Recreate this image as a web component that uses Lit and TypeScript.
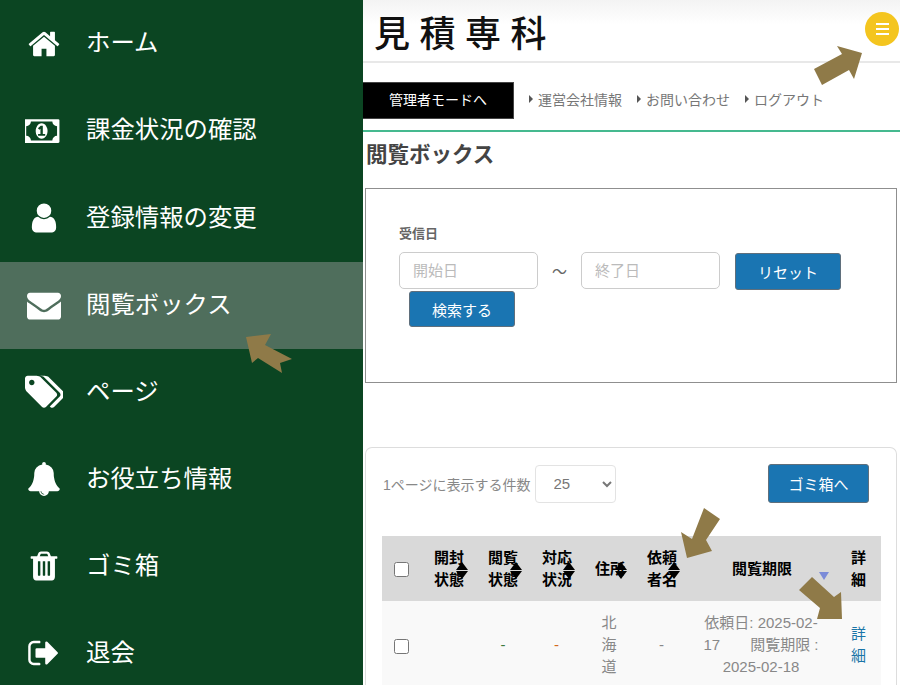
import { LitElement, html, css, svg } from "lit";
import { customElement } from "lit/decorators.js";

type Item = { label: string; vb: string; d: string; cls?: string; active?: boolean };

const items: Item[] = [
  { label: "ホーム", vb: "0 0 1792 1792", d: "M1472 992v480q0 26-19 45t-45 19h-384v-384h-256v384h-384q-26 0-45-19t-19-45v-480q0-1 .5-3t.5-3l575-474 575 474q1 2 1 6zm223-69l-62 74q-8 9-21 11h-3q-13 0-21-7l-692-577-692 577q-12 8-24 7-13-2-21-11l-62-74q-8-10-7-23.5t11-21.5l719-599q32-26 76-26t76 26l244 204v-195q0-14 9-23t23-9h192q14 0 23 9t9 23v408l219 182q10 8 11 21.5t-7 23.5z" },
  { label: "課金状況の確認", vb: "0 0 2048 1792", cls: "wide", d: "M704 1152h384v-96h-128v-448h-114l-148 137 77 80q42-37 55-57h2v288h-128v96zm512-256q0 70-21 142t-59.5 134-101.5 101-138 39-138-39-101.5-101-59.5-134-21-142 21-142 59.5-134 101.5-101 138-39 138 39 101.5 101 59.5 134 21 142zm512 256v-512q-106 0-181-75t-75-181h-1152q0 106-75 181t-181 75v512q106 0 181 75t75 181h1152q0-106 75-181t181-75zm128-832v1152q0 26-19 45t-45 19h-1792q-26 0-45-19t-19-45v-1152q0-26 19-45t45-19h1792q26 0 45 19t19 45z" },
  { label: "登録情報の変更", vb: "0 0 1792 1792", d: "M1536 1399q0 109-62.5 187t-150.5 78h-854q-88 0-150.5-78t-62.5-187q0-85 8.5-160.5t31.5-152 58.5-131 94-89 134.5-34.5q131 128 313 128t313-128q76 0 134.5 34.5t94 89 58.5 131 31.5 152 8.5 160.5zm-256-887q0 159-112.5 271.5t-271.5 112.5-271.5-112.5-112.5-271.5 112.5-271.5 271.5-112.5 271.5 112.5 112.5 271.5z" },
  { label: "閲覧ボックス", active: true, vb: "0 0 1792 1792", d: "M1792 710v794q0 66-47 113t-113 47h-1472q-66 0-113-47t-47-113v-794q44 49 101 87 362 246 497 345 57 42 92.5 65.5t94.5 48 110 24.5h2q51 0 110-24.5t94.5-48 92.5-65.5q170-123 498-345 57-39 100-87zm0-294q0 79-49 151t-122 123q-376 261-468 325-10 7-42.5 30.5t-54 38-52 32.5-57.5 27-50 9h-2q-23 0-50-9t-57.5-27-52-32.5-54-38-42.5-30.5q-91-64-262-182.5t-205-142.5q-62-42-117-115.5t-55-136.5q0-78 41.5-130t118.5-52h1472q65 0 112.5 47t47.5 113z" },
  { label: "ページ", vb: "0 0 1792 1792", cls: "wide", d: "M448 448q0-53-37.5-90.5t-90.5-37.5-90.5 37.5-37.5 90.5 37.5 90.5 90.5 37.5 90.5-37.5 37.5-90.5zm1067 576q0 53-37 90l-491 492q-39 37-91 37-53 0-90-37l-715-716q-38-37-64.5-101t-26.5-117v-416q0-52 38-90t90-38h416q53 0 117 26.5t102 64.5l715 714q37 39 37 91zm384 0q0 53-37 90l-491 492q-39 37-91 37-36 0-59-14t-53-45l470-470q37-37 37-90 0-52-37-91l-715-714q-38-38-102-64.5t-117-26.5h224q53 0 117 26.5t102 64.5l715 714q37 39 37 91z" },
  { label: "お役立ち情報", vb: "0 0 1792 1792", d: "M912 1696q0-16-16-16-59 0-101.5-42.5t-42.5-101.5q0-16-16-16t-16 16q0 73 51.5 124.5t124.5 51.5q16 0 16-16zm816-288q0 52-38 90t-90 38h-448q0 106-75 181t-181 75-181-75-75-181h-448q-52 0-90-38t-38-90q50-42 91-88t85-119.5 74.5-158.5 50-206 19.5-260q0-152 117-282.5t307-158.5q-8-19-8-39 0-40 28-68t68-28 68 28 28 68q0 20-8 39 190 28 307 158.5t117 282.5q0 139 19.5 260t50 206 74.5 158.5 85 119.5 91 88z" },
  { label: "ゴミ箱", vb: "0 0 1792 1792", d: "M704 1376v-704q0-14-9-23t-23-9h-64q-14 0-23 9t-9 23v704q0 14 9 23t23 9h64q14 0 23-9t9-23zm256 0v-704q0-14-9-23t-23-9h-64q-14 0-23 9t-9 23v704q0 14 9 23t23 9h64q14 0 23-9t9-23zm256 0v-704q0-14-9-23t-23-9h-64q-14 0-23 9t-9 23v704q0 14 9 23t23 9h64q14 0 23-9t9-23zm-544-992h448l-48-117q-7-9-17-11h-317q-10 2-17 11zm928 32v64q0 14-9 23t-23 9h-96v948q0 83-47 143.5t-113 60.5h-832q-66 0-113-58.5t-47-141.5v-952h-96q-14 0-23-9t-9-23v-64q0-14 9-23t23-9h309l70-167q15-37 54-63t79-26h320q40 0 79 26t54 63l70 167h309q14 0 23 9t9 23z" },
  { label: "退会", vb: "0 0 1792 1792", d: "M704 1440q0 4 1 20t.5 26.5-3 23.5-10 19.5-20.5 6.5h-320q-119 0-203.5-84.5t-84.5-203.5v-704q0-119 84.5-203.5t203.5-84.5h320q13 0 22.5 9.5t9.5 22.5q0 4 1 20t.5 26.5-3 23.5-10 19.5-20.5 6.5h-320q-66 0-113 47t-47 113v704q0 66 47 113t113 47h288l11.5 1 11.5 3 8 5.5 7 9 2 13.5zm928-544q0 26-19 45l-544 544q-19 19-45 19t-45-19-19-45v-288h-448q-26 0-45-19t-19-45v-384q0-26 19-45t45-19h448v-288q0-26 19-45t45-19 45 19l544 544q19 19 19 45z" },
];

const arrows = [
  "862,53 837,46 842,54 814,69 822,85 849,70 854,79",
  "246,337 271,334 265,345 292,359 280,363 282,373 258,358 252,363",
  "687,558 681,532 692,539 704,508 720,519 706,540 712,551",
  "842,619 841,592 834,597 812,577 799,590 820,608 817,619",
];

@customElement("app-root")
export class AppRoot extends LitElement {
  static styles = css`
    :host {
      display: block;
      position: relative;
      width: 900px;
      height: 685px;
      overflow: hidden;
      background: #fff;
      font-family: "Liberation Sans", "Noto Sans CJK JP", Arial, sans-serif;
    }
    * { box-sizing: border-box; }
    .page { display: flex; height: 685px; }
    .side {
      width: 363px;
      flex: none;
      background: #0b4522;
      color: #fff;
      display: flex;
      flex-direction: column;
      overflow: hidden;
    }
    .side-list { padding-top: 0.5px; }
    .item {
      height: 87.1px;
      display: flex;
      align-items: center;
      gap: 23px;
      padding-left: 25px;
      padding-bottom: 1px;
      font-size: 24.4px;
      line-height: 1;
    }
    .item.active { background: #4f6e5c; }
    .ico { width: 38px; height: 34px; display: flex; justify-content: center; align-items: center; flex: none; }
    .ico svg { width: 34px; height: 34px; fill: #fff; display: block; }
    .ico.wide svg { width: 40px; height: 40px; }
    .main { flex: 1; min-width: 0; display: flex; flex-direction: column; }
    .head {
      height: 63px;
      flex: none;
      display: flex;
      align-items: center;
      justify-content: space-between;
      padding: 0 1px 0 11px;
      border-bottom: 2px solid #e8e8e8;
      background: linear-gradient(#f3f3f3, #fff 40%);
    }
    .logo {
      font-family: "Noto Sans CJK JP", sans-serif;
      font-size: 36px;
      font-weight: 500;
      letter-spacing: 9.5px;
      color: #111;
      line-height: 1;
    }
    .burger {
      width: 34px;
      height: 34px;
      border-radius: 50%;
      background: #f4c51f;
      display: flex;
      flex-direction: column;
      align-items: center;
      justify-content: center;
      gap: 2.5px;
      margin-top: -3px;
    }
    .burger i { display: block; width: 13px; height: 2.5px; background: #fff; }
    .nav {
      display: flex;
      align-items: center;
      margin-top: 19px;
      height: 37px;
      font-size: 14px;
      color: #777;
    }
    .admin {
      width: 151px;
      height: 37px;
      background: #000;
      color: #fff;
      display: flex;
      align-items: center;
      justify-content: center;
      margin-right: 15px;
      padding-bottom: 3px;
      border: 1px solid #444;
      border-left: 0;
    }
    .link { display: flex; align-items: center; gap: 5px; margin-right: 15px; padding-bottom: 3px; }
    .link::before {
      content: "";
      width: 0;
      height: 0;
      border-left: 4px solid #555;
      border-top: 4px solid transparent;
      border-bottom: 4px solid transparent;
    }
    .rule { height: 2px; background: #45b98f; margin-top: 11px; flex: none; }
    h1 {
      margin: 8px 0 0 3px;
      font-size: 21.5px;
      line-height: 30px;
      font-weight: 700;
      color: #444;
    }
    .search {
      margin: 18px 3px 0 2px;
      height: 195px;
      border: 1px solid #8f8f8f;
      padding: 36px 0 0 33px;
      flex: none;
    }
    .lbl { font-size: 13px; font-weight: 700; color: #666; line-height: 18px; }
    .fields { display: flex; flex-wrap: wrap; align-items: flex-start; margin-top: 9px; width: 460px; }
    input.date {
      width: 139px;
      height: 37px;
      border: 1px solid #ccc;
      border-radius: 5px;
      padding: 0 13px;
      font: inherit;
      font-size: 15px;
      background: #fff;
    }
    input.date::placeholder { color: #bbb; }
    .tilde { width: 43px; text-align: center; font-size: 15px; color: #666; line-height: 40px; }
    .btn {
      background: #1a75b2;
      border: 1px solid #5f6f7c;
      border-radius: 3px;
      color: #fff;
      font: inherit;
      font-size: 15px;
      display: flex;
      align-items: center;
      justify-content: center;
      height: 37px;
      width: 106px;
      padding: 0;
    }
    .reset { margin: 1px 0 0 15px; }
    .go { margin: -1px 0 0 10px; height: 36px; }
    .card {
      margin: 64px 3px 0 2px;
      border: 1px solid #ddd;
      border-bottom: 0;
      border-radius: 7px 7px 0 0;
      padding: 16px 16px 0 17px;
      flex: 1;
    }
    .tools { display: flex; align-items: center; height: 39px; font-size: 14px; color: #888; }
    select {
      margin-left: 4px;
      width: 81px;
      height: 38px;
      border: 1px solid #e3e3e3;
      border-radius: 4px;
      background: #fff;
      color: #777;
      font: inherit;
      font-size: 15px;
      padding-left: 14px;
    }
    .trash { width: 101px; height: 39px; margin-left: auto; margin-right: 11px; }
    table {
      width: 499px;
      margin: 33px 0 0 -1px;
      border-collapse: collapse;
      table-layout: fixed;
      font-size: 15px;
    }
    th {
      background: #d9d9d9;
      color: #000;
      text-align: left;
      height: 65px;
      padding: 0 8px 0 12px;
      line-height: 22px;
      font-weight: 700;
      font-size: 15px;
      position: relative;
      z-index: 0;
    }
    th.box, td.box { padding: 0 1px 0 0; text-align: center; }
    th.nw { white-space: nowrap; }
    th.ctr { text-align: center; padding-right: 15px; }
    th.last { padding-right: 12px; }
    td {
      background: #f9f9f9;
      color: #888;
      height: 88px;
      padding: 0 12px;
      text-align: center;
      line-height: 22px;
    }
    td.date-cell { padding-right: 17px; padding-left: 12px; }
    td.ok { color: #3c7a3c; }
    td.warn { color: #d2691e; }
    td.more { color: #1a75a8; text-align: left; }
    input[type="checkbox"] { width: 15px; height: 15px; margin: 0; vertical-align: middle; }
    .up, .dn, .dn-blue {
      position: absolute;
      right: 8px;
      width: 0;
      height: 0;
      border-left: 6px solid transparent;
      border-right: 6px solid transparent;
      z-index: -1;
    }
    .up { top: 26px; border-bottom: 8px solid #000; }
    .dn { top: 35px; border-top: 8px solid #000; }
    .dn-blue { top: 36px; right: 10px; border-left-width: 5px; border-right-width: 5px; border-top: 8px solid #7b8bd8; }
    .marks { position: absolute; inset: 0; width: 900px; height: 685px; pointer-events: none; }
  `;

  private sortTh(text: string, cls = "") {
    return html`<th class=${cls}>${text}<span class="up"></span><span class="dn"></span></th>`;
  }

  render() {
    return html`
      <div class="page">
        <aside class="side">
          <div class="side-list">
            ${items.map(
              (it) => html`
                <div class="item ${it.active ? "active" : ""}">
                  <span class="ico ${it.cls ?? ""}">
                    <svg viewBox=${it.vb}><path d=${it.d}></path></svg>
                  </span>
                  <span>${it.label}</span>
                </div>
              `
            )}
          </div>
        </aside>
        <main class="main">
          <header class="head">
            <div class="logo">見積専科</div>
            <div class="burger"><i></i><i></i><i></i></div>
          </header>
          <nav class="nav">
            <div class="admin">管理者モードへ</div>
            <div class="link">運営会社情報</div>
            <div class="link">お問い合わせ</div>
            <div class="link">ログアウト</div>
          </nav>
          <div class="rule"></div>
          <h1>閲覧ボックス</h1>
          <section class="search">
            <div class="lbl">受信日</div>
            <div class="fields">
              <input class="date" placeholder="開始日" />
              <span class="tilde">～</span>
              <input class="date" placeholder="終了日" />
              <button class="btn reset">リセット</button>
              <button class="btn go">検索する</button>
            </div>
          </section>
          <section class="card">
            <div class="tools">
              <span>1ページに表示する件数</span>
              <select><option>25</option></select>
              <button class="btn trash">ゴミ箱へ</button>
            </div>
            <table>
              <colgroup>
                <col style="width:40px" /><col style="width:54px" /><col style="width:54px" />
                <col style="width:53px" /><col style="width:52px" /><col style="width:53px" />
                <col style="width:151px" /><col style="width:42px" />
              </colgroup>
              <thead>
                <tr>
                  <th class="box"><input type="checkbox" /></th>
                  ${this.sortTh("開封状態")}
                  ${this.sortTh("閲覧状態")}
                  ${this.sortTh("対応状況")}
                  ${this.sortTh("住所", "nw")}
                  ${this.sortTh("依頼者名")}
                  <th class="ctr">閲覧期限<span class="dn-blue"></span></th>
                  <th class="last">詳細</th>
                </tr>
              </thead>
              <tbody>
                <tr>
                  <td class="box"><input type="checkbox" /></td>
                  <td></td>
                  <td class="ok">-</td>
                  <td class="warn">-</td>
                  <td>北海道</td>
                  <td>-</td>
                  <td class="date-cell">依頼日: 2025-02-17　　閲覧期限 : 2025-02-18</td>
                  <td class="more">詳細</td>
                </tr>
              </tbody>
            </table>
          </section>
        </main>
      </div>
      <svg class="marks" viewBox="0 0 900 685">
        ${arrows.map((p) => svg`<polygon points=${p} fill="#8f7a48"></polygon>`)}
      </svg>
    `;
  }
}
